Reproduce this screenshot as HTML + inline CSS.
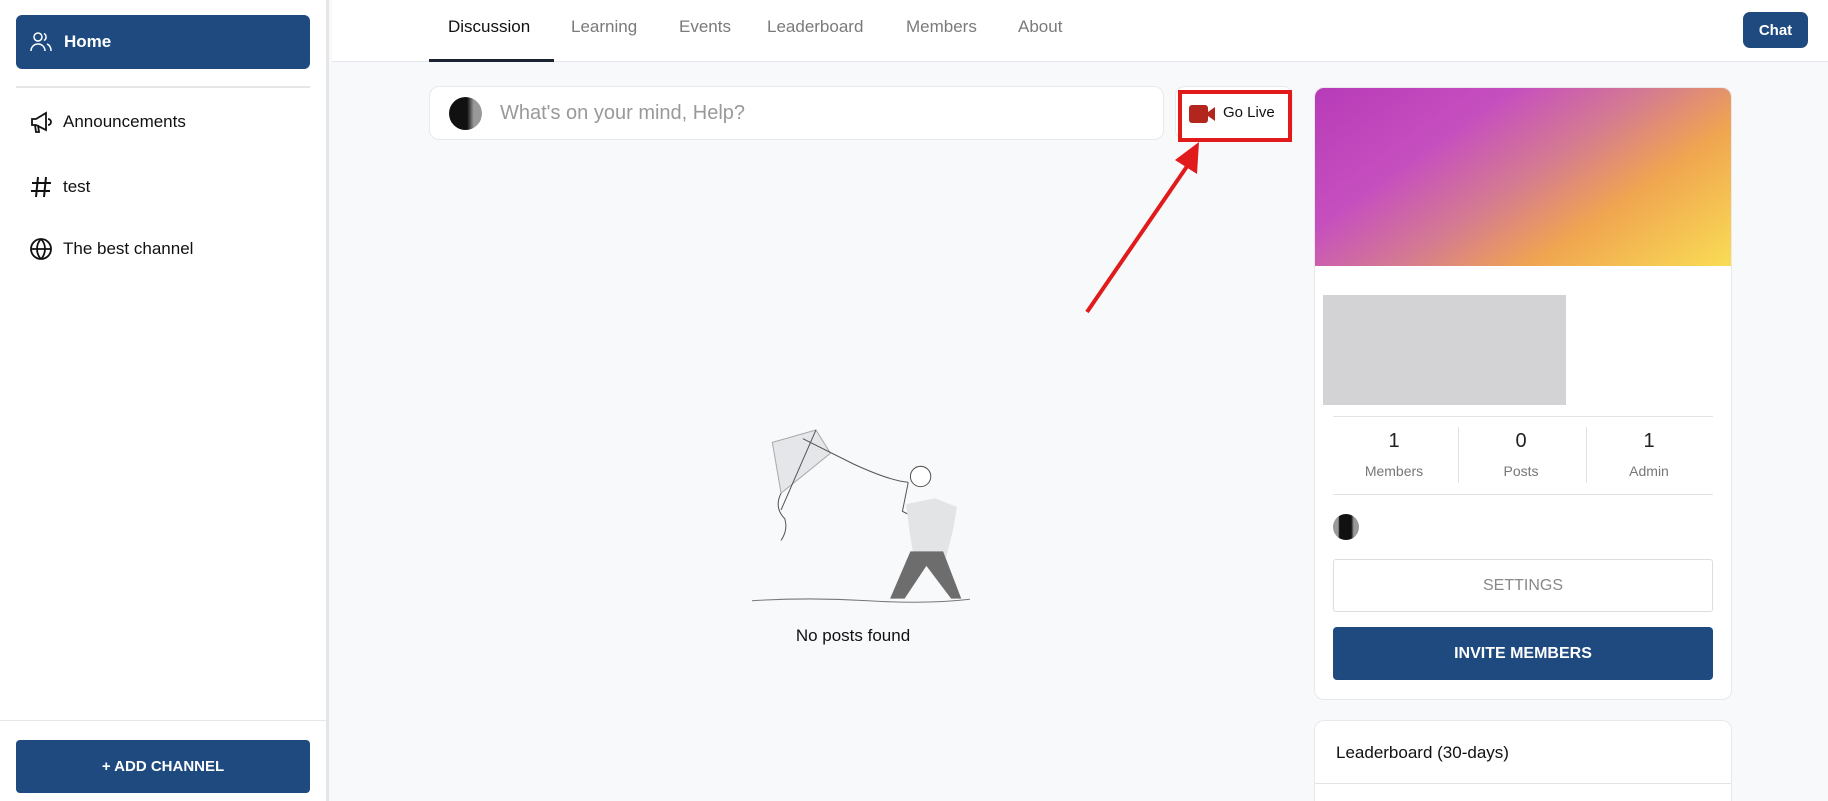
<!DOCTYPE html>
<html style="overflow:hidden;height:801px"><head><meta charset="utf-8"><style>
*{box-sizing:border-box;margin:0;padding:0}
body{width:1828px;height:801px;overflow:hidden;background:#f8f9fb;font-family:"Liberation Sans",sans-serif;position:relative;color:#111}
.abs{position:absolute}
.side{left:0;top:0;width:329px;height:801px;background:#fff;border-right:3px solid #e4e5e7}
.home{left:16px;top:15px;width:294px;height:54px;background:#1e4a7f;border-radius:6px;color:#fff;font-size:17px;font-weight:bold;display:flex;align-items:center;padding-left:48px}
.item{left:29px;font-size:17px;display:flex;align-items:center;gap:10px;height:28px}
.hdr{left:332px;top:0;width:1496px;height:62px;background:#fff;border-bottom:1px solid #e6e7ea}
.tab{top:17px;font-size:17px;color:#7a7a7a}
.card{background:#fff;border:1px solid #e8e9ec;border-radius:10px}
.btn{background:#1e4a7f;color:#fff;border-radius:4px;display:flex;align-items:center;justify-content:center;font-weight:bold}
.num{font-size:20px;color:#222;text-align:center;width:120px}
.lbl{font-size:14px;color:#777;text-align:center;width:120px}
</style></head><body>
<div class="abs side"></div>
<div class="abs home">Home</div>
<svg class="abs" style="left:30px;top:31px" width="22" height="22" viewBox="0 0 22 22" fill="none" stroke="#fff" stroke-width="1.5"><circle cx="8" cy="6" r="4"/><path d="M1 20c0-4 3-7 7-7s7 3 7 7"/><path d="M14 2.5a4 4 0 0 1 0 7"/><path d="M17 13c2.5 1 4 3.5 4 7"/></svg>
<div class="abs" style="left:16px;top:86px;width:294px;height:2px;background:#e6e6e6"></div>
<div class="abs item" style="top:108px"><svg width="24" height="24" viewBox="0 0 24 24" fill="none" stroke="#111" stroke-width="1.8"><path d="M3 9h4l10-6v17L7 15H3z"/><path d="M6 15l1 7h3l-1-7"/><path d="M19 9a3 3 0 0 1 0 6"/></svg><span>Announcements</span></div>
<div class="abs item" style="top:173px"><svg width="24" height="24" viewBox="0 0 24 24" fill="none" stroke="#111" stroke-width="2"><path d="M9 2L7 22M17 2l-2 20M3 8h19M2 16h19"/></svg><span>test</span></div>
<div class="abs item" style="top:235px"><svg width="24" height="24" viewBox="0 0 24 24" fill="none" stroke="#111" stroke-width="1.8"><circle cx="12" cy="12" r="10"/><path d="M2 12h20M12 2c-3 3-4 6-4 10s1 7 4 10M12 2c3 3 4 6 4 10s-1 7-4 10"/></svg><span>The best channel</span></div>
<div class="abs" style="left:0;top:720px;width:329px;height:1px;background:#e6e6e6"></div>
<div class="abs btn" style="left:16px;top:740px;width:294px;height:53px;font-size:15px">+ ADD CHANNEL</div>

<div class="abs hdr"></div>
<div class="abs tab" style="left:448px;color:#111">Discussion</div>
<div class="abs" style="left:429px;top:59px;width:125px;height:3px;background:#1c2433"></div>
<div class="abs tab" style="left:571px">Learning</div>
<div class="abs tab" style="left:679px">Events</div>
<div class="abs tab" style="left:767px">Leaderboard</div>
<div class="abs tab" style="left:906px">Members</div>
<div class="abs tab" style="left:1018px">About</div>
<div class="abs btn" style="left:1743px;top:12px;width:65px;height:36px;font-size:15px;border-radius:7px">Chat</div>

<div class="abs card" style="left:429px;top:86px;width:735px;height:54px"></div>
<div class="abs" style="left:449px;top:97px;width:33px;height:33px;border-radius:50%;background:linear-gradient(90deg,#111 0,#111 55%,#999 75%)"></div>
<div class="abs" style="left:500px;top:102px;font-size:20px;color:#999">What's on your mind, Help?</div>
<div class="abs card" style="left:1175px;top:86px;width:118px;height:54px"></div>
<div class="abs" style="left:1178px;top:90px;width:114px;height:52px;border:4px solid #e11b1b"></div>
<svg class="abs" style="left:1189px;top:104px" width="27" height="20" viewBox="0 0 27 20"><rect x="0" y="1" width="19" height="18" rx="3" fill="#b3261e"/><path d="M19 8l7-5v14l-7-5z" fill="#b3261e"/></svg>
<div class="abs" style="left:1223px;top:104px;font-size:15px;color:#111">Go Live</div>
<svg class="abs" style="left:0;top:0" width="1828" height="801"><line x1="1087" y1="312" x2="1190" y2="162" stroke="#e11b1b" stroke-width="4"/><path d="M1199 142l-2 32-22-14z" fill="#e11b1b"/></svg>

<svg class="abs" style="left:752px;top:424px" width="218" height="182" viewBox="0 0 300 250" fill="none" stroke="#555" stroke-width="1.4">
<path d="M28 25L88 8L108 40L40 95Z" fill="#e5e6e9" stroke="#aaa"/>
<path d="M88 8L40 118"/><path d="M70 20Q110 40 140 55Q190 78 215 80"/>
<path d="M40 95q-10 20 5 35q5 15-5 30"/>
<path d="M215 80l-8 40 20 10"/>
<circle cx="232" cy="72" r="14" fill="#fff"/>
<path d="M212 110l40-8 30 12-5 30-10 40-45-5-5-30z" fill="#e3e4e6" stroke="none"/>
<path d="M218 175l45 0 25 65h-14l-34-45-30 45-20 0z" fill="#6d6d6d" stroke="none"/>
<path d="M0 243q80-5 160 0t140-2" stroke="#777"/>
</svg>
<div class="abs" style="left:753px;top:626px;width:200px;text-align:center;font-size:17px;color:#111">No posts found</div>

<div class="abs card" style="left:1314px;top:87px;width:418px;height:613px;overflow:hidden">
<div style="height:178px;background:linear-gradient(145deg,#b73bb8 0%,#c64fbf 30%,#d47a92 50%,#f0a550 70%,#f9dd55 100%)"></div>
</div>
<div class="abs" style="left:1323px;top:295px;width:243px;height:110px;background:#d3d3d5"></div>
<div class="abs" style="left:1333px;top:416px;width:380px;height:1px;background:#e3e3e3"></div>
<div class="abs" style="left:1458px;top:427px;width:1px;height:56px;background:#e3e3e3"></div>
<div class="abs" style="left:1586px;top:427px;width:1px;height:56px;background:#e3e3e3"></div>
<div class="abs num" style="left:1334px;top:430px">1</div><div class="abs lbl" style="left:1334px;top:463px">Members</div>
<div class="abs num" style="left:1461px;top:430px">0</div><div class="abs lbl" style="left:1461px;top:463px">Posts</div>
<div class="abs num" style="left:1589px;top:430px">1</div><div class="abs lbl" style="left:1589px;top:463px">Admin</div>
<div class="abs" style="left:1333px;top:494px;width:380px;height:1px;background:#e3e3e3"></div>
<div class="abs" style="left:1333px;top:514px;width:26px;height:26px;border-radius:50%;background:linear-gradient(90deg,#999 0,#999 20%,#111 25%,#111 70%,#999 80%)"></div>
<div class="abs" style="left:1333px;top:559px;width:380px;height:53px;border:1px solid #ddd;border-radius:3px;display:flex;align-items:center;justify-content:center;font-size:16px;color:#888">SETTINGS</div>
<div class="abs btn" style="left:1333px;top:627px;width:380px;height:53px;font-size:16px">INVITE MEMBERS</div>
<div class="abs card" style="left:1314px;top:720px;width:418px;height:81px;border-bottom:none;border-radius:10px 10px 0 0"></div>
<div class="abs" style="left:1336px;top:743px;font-size:17px;color:#111">Leaderboard (30-days)</div>
<div class="abs" style="left:1315px;top:783px;width:416px;height:1px;background:#e3e3e3"></div>
</body></html>
